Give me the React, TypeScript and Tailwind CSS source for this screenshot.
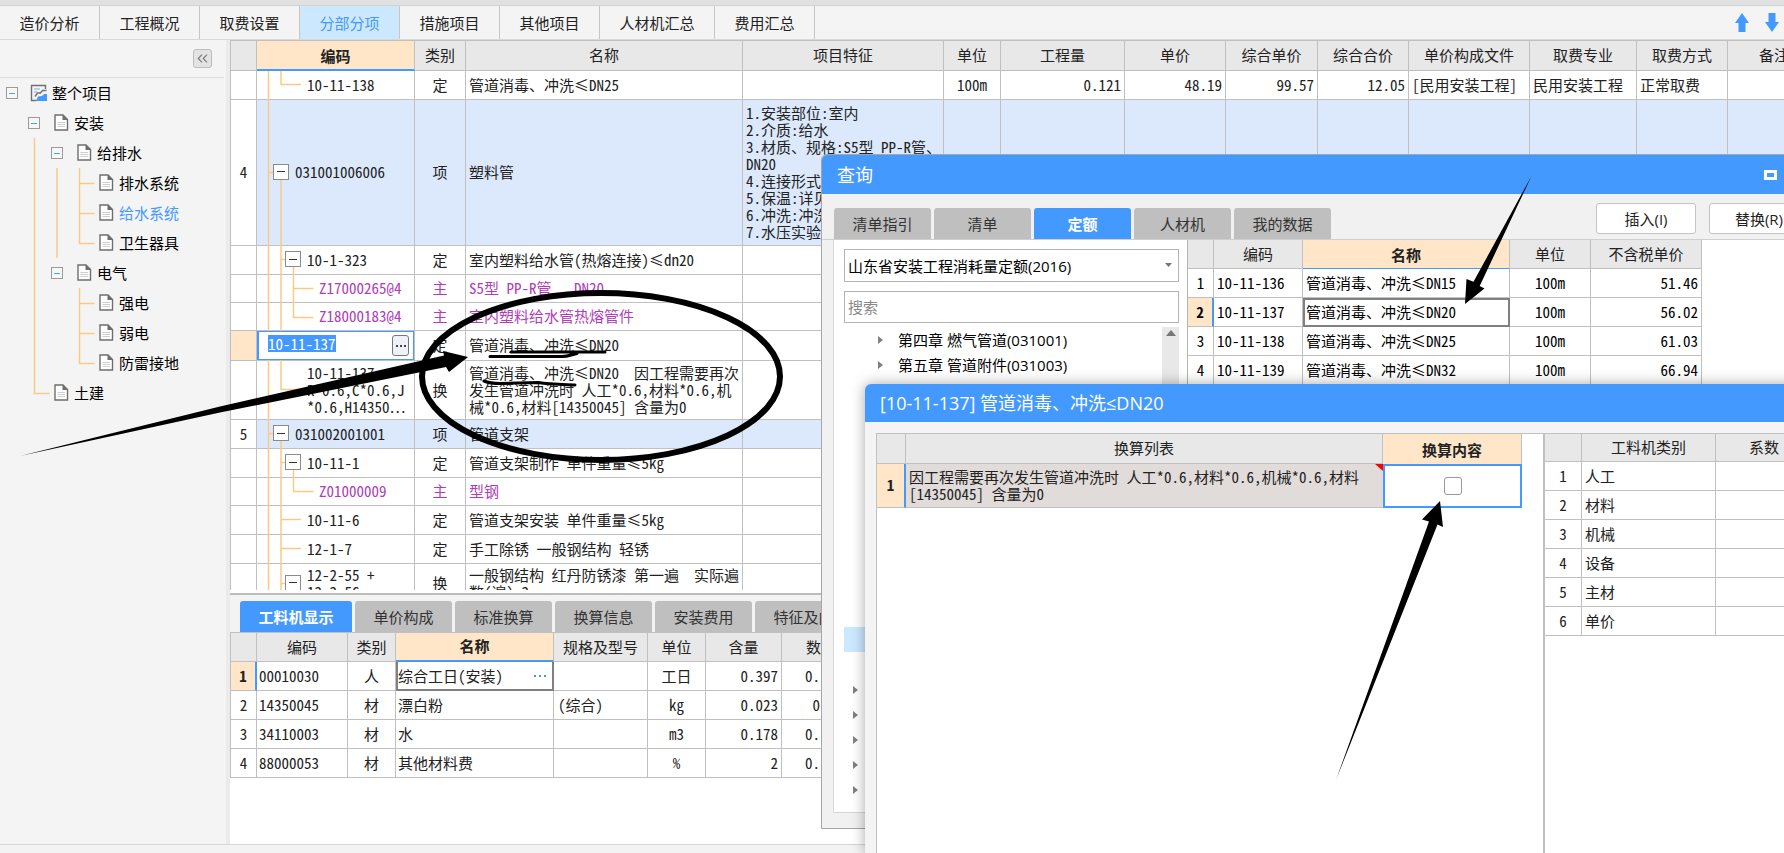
import React from "react";
import { ChevronsLeft } from "lucide-react";

const gridFont =
  "text-[15px] leading-[17px] text-[#222] font-['Noto_Sans_CJK_SC',sans-serif] [font-feature-settings:'hwid']";

// ---------- data ----------

const topTabs = ["造价分析", "工程概况", "取费设置", "分部分项", "措施项目", "其他项目", "人材机汇总", "费用汇总"];

type TreeNode = { label: string; level: number; open?: boolean; root?: boolean; active?: boolean };

const tree: TreeNode[] = [
  { label: "整个项目", level: 0, open: true, root: true },
  { label: "安装", level: 1, open: true },
  { label: "给排水", level: 2, open: true },
  { label: "排水系统", level: 3 },
  { label: "给水系统", level: 3, active: true },
  { label: "卫生器具", level: 3 },
  { label: "电气", level: 2, open: true },
  { label: "强电", level: 3 },
  { label: "弱电", level: 3 },
  { label: "防雷接地", level: 3 },
  { label: "土建", level: 1 },
];

const treeIndent = ["pl-[6px]", "pl-[28px]", "pl-[51px]", "pl-[73px]"];

type Row = {
  no?: string;
  code: string;
  kind: string;
  name: string;
  feature?: string;
  values?: string[];
  level: 1 | 2 | 3;
  toggle?: boolean;
  editing?: boolean;
  size: string;
};

const rows: Row[] = [
  {
    code: "10-11-138",
    kind: "定",
    name: "管道消毒、冲洗≤DN25",
    values: ["100m", "0.121", "48.19", "99.57", "12.05", "[民用安装工程]", "民用安装工程", "正常取费"],
    level: 2,
    size: "h-[29px]",
  },
  {
    no: "4",
    code: "031001006006",
    kind: "项",
    name: "塑料管",
    feature: "1.安装部位:室内\n2.介质:给水\n3.材质、规格:S5型 PP-R管、\nDN20\n4.连接形式\n5.保温:详见\n6.冲洗:冲洗\n7.水压实验",
    level: 1,
    toggle: true,
    size: "h-[146px]",
  },
  { code: "10-1-323", kind: "定", name: "室内塑料给水管(热熔连接)≤dn20", level: 2, toggle: true, size: "h-[29px]" },
  { code: "Z17000265@4", kind: "主", name: "S5型 PP-R管   DN20", level: 3, size: "h-[28px]" },
  { code: "Z18000183@4", kind: "主", name: "室内塑料给水管热熔管件", level: 3, size: "h-[28px]" },
  { code: "10-11-137", kind: "定", name: "管道消毒、冲洗≤DN20", level: 2, editing: true, size: "h-[29px]" },
  {
    code: "10-11-137\nR*0.6,C*0.6,J\n*0.6,H14350⋯",
    kind: "换",
    name: "管道消毒、冲洗≤DN20  因工程需要再次\n发生管道冲洗时 人工*0.6,材料*0.6,机\n械*0.6,材料[14350045] 含量为0",
    level: 2,
    size: "h-[59px]",
  },
  { no: "5", code: "031002001001", kind: "项", name: "管道支架", level: 1, toggle: true, size: "h-[29px]" },
  { code: "10-11-1", kind: "定", name: "管道支架制作 单件重量≤5kg", level: 2, toggle: true, size: "h-[29px]" },
  { code: "Z01000009", kind: "主", name: "型钢", level: 3, size: "h-[28px]" },
  { code: "10-11-6", kind: "定", name: "管道支架安装 单件重量≤5kg", level: 2, size: "h-[29px]" },
  { code: "12-1-7", kind: "定", name: "手工除锈 一般钢结构 轻锈", level: 2, size: "h-[29px]" },
  {
    code: "12-2-55 +\n12-2-56",
    kind: "换",
    name: "一般钢结构 红丹防锈漆 第一遍  实际遍\n数(遍):2",
    level: 2,
    toggle: true,
    size: "h-[40px]",
  },
];

const mainHeads = ["类别", "名称", "项目特征", "单位", "工程量", "单价", "综合单价", "综合合价", "单价构成文件", "取费专业", "取费方式", "备注"];
const mainAlign = ["text-center", "text-right", "text-right", "text-right", "text-right", "text-left", "text-left", "text-left", "text-left"];

const bottomTabs = ["工料机显示", "单价构成", "标准换算", "换算信息", "安装费用", "特征及内容"];

const resources = [
  ["00010030", "人", "综合工日(安装)", "", "工日", "0.397", "0."],
  ["14350045", "材", "漂白粉", "(综合)", "kg", "0.023", " 0"],
  ["34110003", "材", "水", "", "m3", "0.178", "0."],
  ["88000053", "材", "其他材料费", "", "%", "2", "0."],
];

const queryTabs = ["清单指引", "清单", "定额", "人材机", "我的数据"];

const quotas = [
  ["10-11-136", "管道消毒、冲洗≤DN15", "51.46"],
  ["10-11-137", "管道消毒、冲洗≤DN20", "56.02"],
  ["10-11-138", "管道消毒、冲洗≤DN25", "61.03"],
  ["10-11-139", "管道消毒、冲洗≤DN32", "66.94"],
];

// chapter list: title, closed child node, current node or a blank line
const chapters = [
  "第四章 燃气管道(031001)",
  "第五章 管道附件(031003)",
  "", "", "", "", "", "", "", "", "", "",
  "current",
  "",
  "node", "node", "node", "node", "node",
];

const factors = ["人工", "材料", "机械", "设备", "主材", "单价"];

// ---------- small parts ----------

const Th = ({ children, className = "" }: { children?: React.ReactNode; className?: string }) => (
  <th className={`border-r border-b border-[#c0c0c0] bg-[#e8e8e8] p-0 pb-[2px] font-normal whitespace-nowrap ${className}`}>
    {children}
  </th>
);

const Td = ({ children, className = "" }: { children?: React.ReactNode; className?: string }) => (
  <td className={`border-r border-b border-[#c0c0c0] p-0 whitespace-pre ${className}`}>
    <div className="pb-[2px]">{children}</div>
  </td>
);

const FileIcon = () => (
  <svg className="h-5 w-5 shrink-0" viewBox="0 0 20 20" fill="none">
    <path d="M4 2h8l4.500 4.500v10.500H4z" fill="#fff" stroke="#6e6e6e" strokeWidth="1.400" />
    <path d="M11.500 1.500v5.500h5.500z" fill="#6e6e6e" />
    <path d="M6.500 9.500h7.500M6.500 11.500h7.500M6.500 13.500h7.500" stroke="#cfcfcf" />
  </svg>
);

const ProjectIcon = () => (
  <svg className="h-5 w-5 shrink-0" viewBox="0 0 20 20" fill="none">
    <path d="M7.500 17.500H2.500v-15h14v3.500" stroke="#707070" strokeWidth="1.400" />
    <path d="M5 6h6M5 9h3" stroke="#9cc8f5" strokeWidth="1.500" />
    <path d="M6 13.500l2.500-3.500h3l2-2.500h4" stroke="#707070" strokeWidth="1.400" />
    <path d="M7 18l2-4.500 4-.5 2-2h3v7z" fill="#4499ff" />
  </svg>
);

const Triangle = () => (
  <svg className="h-2 w-[5px] shrink-0" viewBox="0 0 5 8">
    <path d="M0 0l5 4-5 4z" fill="#808080" />
  </svg>
);

// ---------- sidebar ----------

function Sidebar() {
  return (
    <aside className="w-[230px] shrink-0 border-r-4 border-[#ebebeb] bg-[#f4f4f4]">
      <div className="mr-[2px] flex h-[38px] items-start justify-end border-b border-[#dcdcdc] pt-[9px] pr-3">
        <button
          aria-label="收起"
          className="flex h-[19px] w-[19px] items-center justify-center rounded-[3px] border border-[#bdbdbd] bg-[#e3e3e3]"
        >
          <ChevronsLeft size={17} strokeWidth={1.5} color="#777" />
        </button>
      </div>
      <div className="relative">
        <svg className="absolute top-0 left-0 h-[330px] w-[120px]" fill="none" stroke="#fbc985" strokeWidth="1.500">
          <path d="M34.500 60v255.500h15M57 90v90" />
          <path d="M79.500 90v75.500h15M79.500 105.500h15M79.500 135.500h15" />
          <path d="M79.500 210v75.500h15M79.500 225.500h15M79.500 255.500h15" />
        </svg>
        <ul>
          {tree.map((n) => (
            <li key={n.label} className={`flex h-[30px] items-center ${treeIndent[n.level]}`}>
              {n.open ? (
                <button
                  aria-label="折叠"
                  className="relative flex h-[12px] w-[12px] items-center justify-center border border-[#9a9a9a] bg-[#f8f8f8]"
                >
                  <span className="h-px w-[6px] bg-[#3fa9e8]" />
                </button>
              ) : (
                <span className="w-[12px]" />
              )}
              <span className="ml-[11px] flex">{n.root ? <ProjectIcon /> : <FileIcon />}</span>
              <a href="#" className={`ml-[3px] ${n.active ? "text-[#4499ff]" : "text-black"}`}>
                {n.label}
              </a>
            </li>
          ))}
        </ul>
      </div>
    </aside>
  );
}

// ---------- main grid ----------

function codePadding(r: Row) {
  if (r.level === 1) return "pl-[16px]";
  if (r.level === 3) return "pl-[62px]";
  return r.toggle ? "pl-[28px]" : "pl-[50px]";
}

function CodeCell({ row }: { row: Row }) {
  if (row.editing) {
    return (
      <div className="relative z-10 flex h-[29px] items-start justify-between border border-l-2 border-[#4499ff] bg-white pt-[3px] pr-1 pl-[9px]">
        <input
          aria-label="编码"
          defaultValue={row.code}
          className="h-[17px] w-[68px] bg-[#4499ff] text-white outline-none"
        />
        <button
          aria-label="选择"
          className="flex h-[21px] w-[17px] items-center justify-center gap-[2px] rounded-[3px] border border-[#777] bg-[#eef1f8]"
        >
          <i className="h-[2px] w-[2px] bg-[#444]" />
          <i className="h-[2px] w-[2px] bg-[#444]" />
          <i className="h-[2px] w-[2px] bg-[#444]" />
        </button>
      </div>
    );
  }
  return (
    <div className={`flex items-center pb-[2px] ${codePadding(row)}`}>
      {row.toggle && (
        <button
          aria-label="折叠"
          className="relative z-10 mr-[6px] flex h-4 w-4 shrink-0 items-center justify-center border border-[#8a8a8a] bg-white"
        >
          <span className="h-px w-2 bg-[#333]" />
        </button>
      )}
      <span>{row.code}</span>
    </div>
  );
}

function MainGrid() {
  return (
    <div className={`relative min-h-0 flex-1 overflow-hidden border-t border-l border-[#c0c0c0] bg-white ${gridFont}`}>
      <table className="w-[1590px] min-w-full table-fixed border-separate border-spacing-0">
        <colgroup>
          <col className="w-[26px]" />
          <col className="w-[158px]" />
          <col className="w-[51px]" />
          <col className="w-[277px]" />
          <col className="w-[201px]" />
          <col className="w-[57px]" />
          <col className="w-[124px]" />
          <col className="w-[101px]" />
          <col className="w-[92px]" />
          <col className="w-[91px]" />
          <col className="w-[121px]" />
          <col className="w-[107px]" />
          <col className="w-[91px]" />
          <col />
        </colgroup>
        <thead>
          <tr className="h-[30px]">
            <Th />
            <th className="border-r border-b-2 border-r-[#c0c0c0] border-b-[#4499ff] bg-[#ffe6c8] p-0 font-bold">编码</th>
            {mainHeads.map((h) => (
              <Th key={h}>{h}</Th>
            ))}
          </tr>
        </thead>
        <tbody>
          {rows.map((r, i) => (
            <tr
              key={i}
              className={`${r.size} ${r.level === 1 ? "bg-[#dce9fd]" : ""} ${r.level === 3 ? "text-[#b03cb8]" : ""}`}
            >
              <Td className={`text-center ${r.editing ? "bg-[#ffe6c8]" : "bg-white"}`}>{r.no}</Td>
              <td className="border-r border-b border-[#c0c0c0] p-0 whitespace-pre">
                <CodeCell row={r} />
              </td>
              <Td className="text-center">{r.kind}</Td>
              <Td className="overflow-hidden pl-[3px]">{r.name}</Td>
              <Td className="pl-[3px]">{r.feature}</Td>
              {mainAlign.map((a, c) => (
                <Td key={c} className={`px-[3px] ${a}`}>
                  {r.values?.[c]}
                </Td>
              ))}
            </tr>
          ))}
        </tbody>
      </table>
      {/* branch lines of the code column */}
      <svg className="absolute top-[30px] left-[26px] h-[520px] w-[70px]" fill="none" stroke="#fbc985" strokeWidth="1.500">
        <path d="M11.500 0v520M24 0v13.500h20" />
        <path d="M11.500 101.500h5M24 109v209.500h20M24 188.500h5M36.500 196v50.500h20M36.500 217.500h20" />
        <path d="M11.500 362.500h5M24 369v150M24 391.500h5M36.500 398v22.500h20M24 448.500h20M24 477.500h20M24 512.500h5" />
      </svg>
    </div>
  );
}

// ---------- resource panel under the grid ----------

function ResourcePanel() {
  return (
    <section className="h-[254px] shrink-0 bg-white">
      <div className="mt-[3px] flex h-[39px] items-end gap-[3px] overflow-hidden border-t-2 border-[#bdbdbd] bg-[#f3f3f3] pl-[10px]">
        {bottomTabs.map((t, i) => (
          <button
            key={t}
            className={`h-[31px] shrink-0 rounded-t-[3px] ${
              i === 0
                ? "w-[112px] bg-[#4499ff] font-bold text-white"
                : i === bottomTabs.length - 1
                  ? "w-[112px] bg-[#bfbfbf] text-[#333]"
                  : "w-[97px] bg-[#bfbfbf] text-[#333]"
            }`}
          >
            {t}
          </button>
        ))}
      </div>
      <table className={`w-[631px] table-fixed border-separate border-spacing-0 border-t border-l border-[#c0c0c0] ${gridFont}`}>
        <colgroup>
          <col className="w-[26px]" />
          <col className="w-[91px]" />
          <col className="w-[48px]" />
          <col className="w-[158px]" />
          <col className="w-[94px]" />
          <col className="w-[58px]" />
          <col className="w-[76px]" />
          <col />
        </colgroup>
        <thead>
          <tr className="h-[29px]">
            <Th />
            <Th>编码</Th>
            <Th>类别</Th>
            <th className="border-r border-b-2 border-r-[#c0c0c0] border-b-[#4499ff] bg-[#ffe6c8] p-0 pb-[2px] font-bold">名称</th>
            <Th>规格及型号</Th>
            <Th>单位</Th>
            <Th>含量</Th>
            <Th>数量</Th>
          </tr>
        </thead>
        <tbody>
          {resources.map((r, i) => (
            <tr key={r[0]} className="h-[29px]">
              <Td className={`text-center ${i === 0 ? "border-r-2 border-r-[#4499ff] bg-[#ffe6c8] font-bold" : ""}`}>{i + 1}</Td>
              <Td className="pl-[2px]">{r[0]}</Td>
              <Td className="text-center">{r[1]}</Td>
              {i === 0 ? (
                <td className="border-2 border-t-0 border-[#808080] p-0">
                  <div className="flex items-center justify-between pr-[6px]">
                    <span>{r[2]}</span>
                    <button aria-label="选择" className="flex gap-[3px]">
                      <i className="h-[2px] w-[2px] bg-[#4499dd]" />
                      <i className="h-[2px] w-[2px] bg-[#4499dd]" />
                      <i className="h-[2px] w-[2px] bg-[#4499dd]" />
                    </button>
                  </div>
                </td>
              ) : (
                <Td className="pl-[2px]">{r[2]}</Td>
              )}
              <Td className="pl-[4px]">{r[3]}</Td>
              <Td className="text-center">{r[4]}</Td>
              <Td className="pr-[3px] text-right">{r[5]}</Td>
              <Td className="pl-[23px]">{r[6]}</Td>
            </tr>
          ))}
        </tbody>
      </table>
    </section>
  );
}

// ---------- 查询 window ----------

function QueryWindow() {
  return (
    <section className="absolute top-[154px] -right-10 left-[821px] flex h-[675px] flex-col rounded-tl-[6px] border border-[#a6a6a6] bg-[#f1f1f1]">
      <header className="flex h-[39px] shrink-0 items-center justify-between rounded-tl-[5px] bg-[#4499ff] pr-[46px] pl-[15px] text-[18px] text-white">
        <h2>查询</h2>
        <button aria-label="最大化" className="h-[10px] w-[13px] border-[3px] border-white" />
      </header>
      <div className="flex h-[46px] shrink-0 items-end justify-between border-b border-[#cfcfcf] pl-[12px]">
        <div className="flex gap-[3px]">
          {queryTabs.map((t) => (
            <button
              key={t}
              className={`h-[31px] w-[97px] rounded-t-[3px] ${
                t === "定额" ? "bg-[#4499ff] font-bold text-white" : "bg-[#bfbfbf] text-[#333]"
              }`}
            >
              {t}
            </button>
          ))}
        </div>
        <div className="mr-[14px] mb-[5px] flex gap-[13px]">
          <button className="h-[31px] w-[100px] rounded-[3px] border border-[#c4c4c4] bg-white">插入(I)</button>
          <button className="h-[31px] w-[100px] rounded-[3px] border border-[#c4c4c4] bg-white">替换(R)</button>
        </div>
      </div>
      <div className="mb-[15px] ml-[11px] flex min-h-0 flex-1 border-b border-l border-[#d6d6d6] bg-white">
        <div className="flex w-[353px] shrink-0 flex-col gap-[9px] py-[9px] pr-[8px] pl-[10px]">
          <div className="relative">
            <select
              aria-label="定额库"
              className="h-[33px] w-full appearance-none border border-[#b4b4b4] bg-white px-[3px] text-black"
            >
              <option>山东省安装工程消耗量定额(2016)</option>
            </select>
            <svg className="absolute top-[14px] right-[7px] h-1 w-[7px]" viewBox="0 0 7 4">
              <path d="M0 0h7L3.500 4z" fill="#777" />
            </svg>
          </div>
          <input
            aria-label="搜索"
            placeholder="搜索"
            className="h-[32px] w-full shrink-0 border border-[#b4b4b4] bg-white px-[3px] placeholder:text-[#888]"
          />
          <div className="-mt-[5px] flex min-h-0 flex-1 justify-between">
            <ul className="flex-1 text-black">
              {chapters.map((c, i) => {
                if (c === "current") return <li key={i} className="h-[25px] bg-[#cce8ff]" />;
                if (c === "node")
                  return (
                    <li key={i} className="flex h-[25px] items-center pl-[9px]">
                      <Triangle />
                    </li>
                  );
                return (
                  <li key={i} className="flex h-[25px] items-center gap-[15px] pl-[34px]">
                    {c && <Triangle />}
                    {c}
                  </li>
                );
              })}
            </ul>
            <div className="flex w-[17px] justify-center bg-[#e8e8e8] pt-[3px]">
              <svg className="h-[6px] w-[10px]" viewBox="0 0 10 6">
                <path d="M0 6h10L5 0z" fill="#777" />
              </svg>
            </div>
          </div>
        </div>
        <div className={`min-w-0 flex-1 border-l border-[#b4b4b4] ${gridFont}`}>
          <table className="w-[514px] table-fixed border-separate border-spacing-0">
            <colgroup>
              <col className="w-[26px]" />
              <col className="w-[89px]" />
              <col className="w-[207px]" />
              <col className="w-[81px]" />
              <col />
            </colgroup>
            <thead>
              <tr className="h-[29px]">
                <Th />
                <Th>编码</Th>
                <th className="border-r border-b border-r-[#c0c0c0] border-b-[#4499ff] bg-[#ffe6c8] p-0 font-bold">名称</th>
                <Th>单位</Th>
                <Th>不含税单价</Th>
              </tr>
            </thead>
            <tbody className="text-black">
              {quotas.map((q, i) => (
                <tr key={q[0]} className="h-[29px]">
                  <Td className={`text-center ${i === 1 ? "border-r-2 border-r-[#4499ff] bg-[#ffe6c8] font-bold" : ""}`}>
                    {i + 1}
                  </Td>
                  <Td className="pl-[3px]">{q[0]}</Td>
                  {i === 1 ? (
                    <td className="border-2 border-[#808080] p-0 pb-[2px] pl-px">{q[1]}</td>
                  ) : (
                    <Td className="pl-[3px]">{q[1]}</Td>
                  )}
                  <Td className="text-center">100m</Td>
                  <Td className="pr-[3px] text-right">{q[2]}</Td>
                </tr>
              ))}
            </tbody>
          </table>
        </div>
      </div>
    </section>
  );
}

// ---------- conversion window ----------

function ConvertWindow() {
  return (
    <section className="absolute top-[384px] -right-10 bottom-0 left-[865px] flex flex-col rounded-tl-[6px] bg-[#f4f4f4] shadow-[0_0_14px_rgba(0,0,0,0.35)]">
      <header className="flex h-[38px] shrink-0 items-center rounded-tl-[6px] bg-[#4499ff] pl-[15px] text-[18px] text-white">
        <h2>[10-11-137] 管道消毒、冲洗≤DN20</h2>
      </header>
      <div className={`mt-[11px] ml-[11px] flex min-h-0 flex-1 border-t border-l border-[#c0c0c0] bg-white ${gridFont}`}>
        <div className="w-[666px] shrink-0">
          <table className="w-[645px] table-fixed border-separate border-spacing-0">
            <colgroup>
              <col className="w-[29px]" />
              <col className="w-[477px]" />
              <col />
            </colgroup>
            <thead>
              <tr className="h-[30px]">
                <Th />
                <Th>换算列表</Th>
                <th className="border-r border-[#c0c0c0] bg-[#ffe6c8] p-0 font-bold">换算内容</th>
              </tr>
            </thead>
            <tbody>
              <tr className="h-[44px]">
                <Td className="border-r-2 border-r-[#4499ff] bg-[#ffe6c8] text-center font-bold">1</Td>
                <td className="relative border-b border-[#c0c0c0] bg-[#e1dbd9] p-0 pb-[2px] pl-[3px] whitespace-pre">
                  {"因工程需要再次发生管道冲洗时 人工*0.6,材料*0.6,机械*0.6,材料\n[14350045] 含量为0"}
                  <svg className="absolute top-0 right-0 h-[7px] w-2" viewBox="0 0 8 7">
                    <path d="M0 0h8v7z" fill="#f00" />
                  </svg>
                </td>
                <td className="border-2 border-[#4499ff] bg-white p-0">
                  <input
                    type="checkbox"
                    aria-label="换算内容"
                    className="mx-auto block h-[18px] w-[18px] appearance-none rounded-[3px] border border-[#999] bg-white"
                  />
                </td>
              </tr>
            </tbody>
          </table>
        </div>
        <div className="flex-1 overflow-hidden border-l-2 border-[#c0c0c0]">
          <table className="w-[268px] table-fixed border-separate border-spacing-0">
            <colgroup>
              <col className="w-[37px]" />
              <col className="w-[134px]" />
              <col />
            </colgroup>
            <thead>
              <tr className="h-[28px]">
                <Th />
                <Th>工料机类别</Th>
                <Th>系数</Th>
              </tr>
            </thead>
            <tbody>
              {factors.map((f, i) => (
                <tr key={f} className="h-[29px]">
                  <Td className="text-center">{i + 1}</Td>
                  <Td className="pl-[3px]">{f}</Td>
                  <Td />
                </tr>
              ))}
            </tbody>
          </table>
        </div>
      </div>
    </section>
  );
}

// Hand-drawn marks on top of everything
function Marks() {
  return (
    <svg className="pointer-events-none absolute top-0 left-0 z-30 h-[853px] w-[1784px]" viewBox="0 0 1784 853">
      <ellipse cx="601" cy="376.500" rx="179" ry="83.500" fill="none" stroke="#000" strokeWidth="6" />
      <path d="M20 456L220 406.500 444 355.500 443 351 468 357 449 372 446 367 220 412.500z" />
      <path d="M1531.500 176L1473.500 281.700 1466.500 279 1465 304 1484.500 288.500 1479.700 286z" />
      <path d="M1336 780L1429 521.500 1422 519.500 1440 501 1443 527 1437.500 524.500z" />
      <g fill="none" stroke="#000" strokeWidth="3" strokeLinecap="round">
        <path d="M490 356.500h72c6 0 10-2 15-3M511 352h94" />
        <path d="M484 381c5 2 10 2.500 16 2.500l38-1c12 2 25 2 37 2.500" />
      </g>
    </svg>
  );
}

export default function App() {
  return (
    <div className="relative flex h-screen min-h-[600px] flex-col overflow-hidden bg-[#f4f4f4] font-['Open_Sans','Noto_Sans_CJK_SC',sans-serif] text-[15px] leading-[22px] text-[#222]">
      <div className="h-[6px] shrink-0 border-b border-[#d2d2d2] bg-[#e1e1e1]" />
      <nav className="flex h-[34px] shrink-0 items-stretch border-b border-[#d9d9d9]">
        {topTabs.map((t) => (
          <button
            key={t}
            className={`border-r border-[#c6c6c6] ${t.length === 5 ? "w-[115px]" : "w-[100px]"} ${
              t === "分部分项" ? "bg-[#cce8ff] text-[#4499ff]" : ""
            }`}
          >
            {t}
          </button>
        ))}
        <div className="ml-auto flex items-center gap-4 pr-[5px]">
          <button aria-label="上移">
            <svg className="h-[19px] w-[14px]" viewBox="0 0 14 19">
              <path d="M7 0l7 10h-3.500v9h-7v-9H0z" fill="#4499ff" />
            </svg>
          </button>
          <button aria-label="下移">
            <svg className="h-[19px] w-[14px]" viewBox="0 0 14 19">
              <path d="M7 19l7-10h-3.500V0h-7v9H0z" fill="#4499ff" />
            </svg>
          </button>
        </div>
      </nav>
      <div className="flex min-h-0 flex-1">
        <Sidebar />
        <main className="flex min-w-0 flex-1 flex-col bg-white">
          <MainGrid />
          <ResourcePanel />
        </main>
      </div>
      <footer className="h-[9px] shrink-0 border-t border-[#d6d6d6] bg-[#f3f3f3]" />
      <QueryWindow />
      <ConvertWindow />
      <Marks />
    </div>
  );
}
